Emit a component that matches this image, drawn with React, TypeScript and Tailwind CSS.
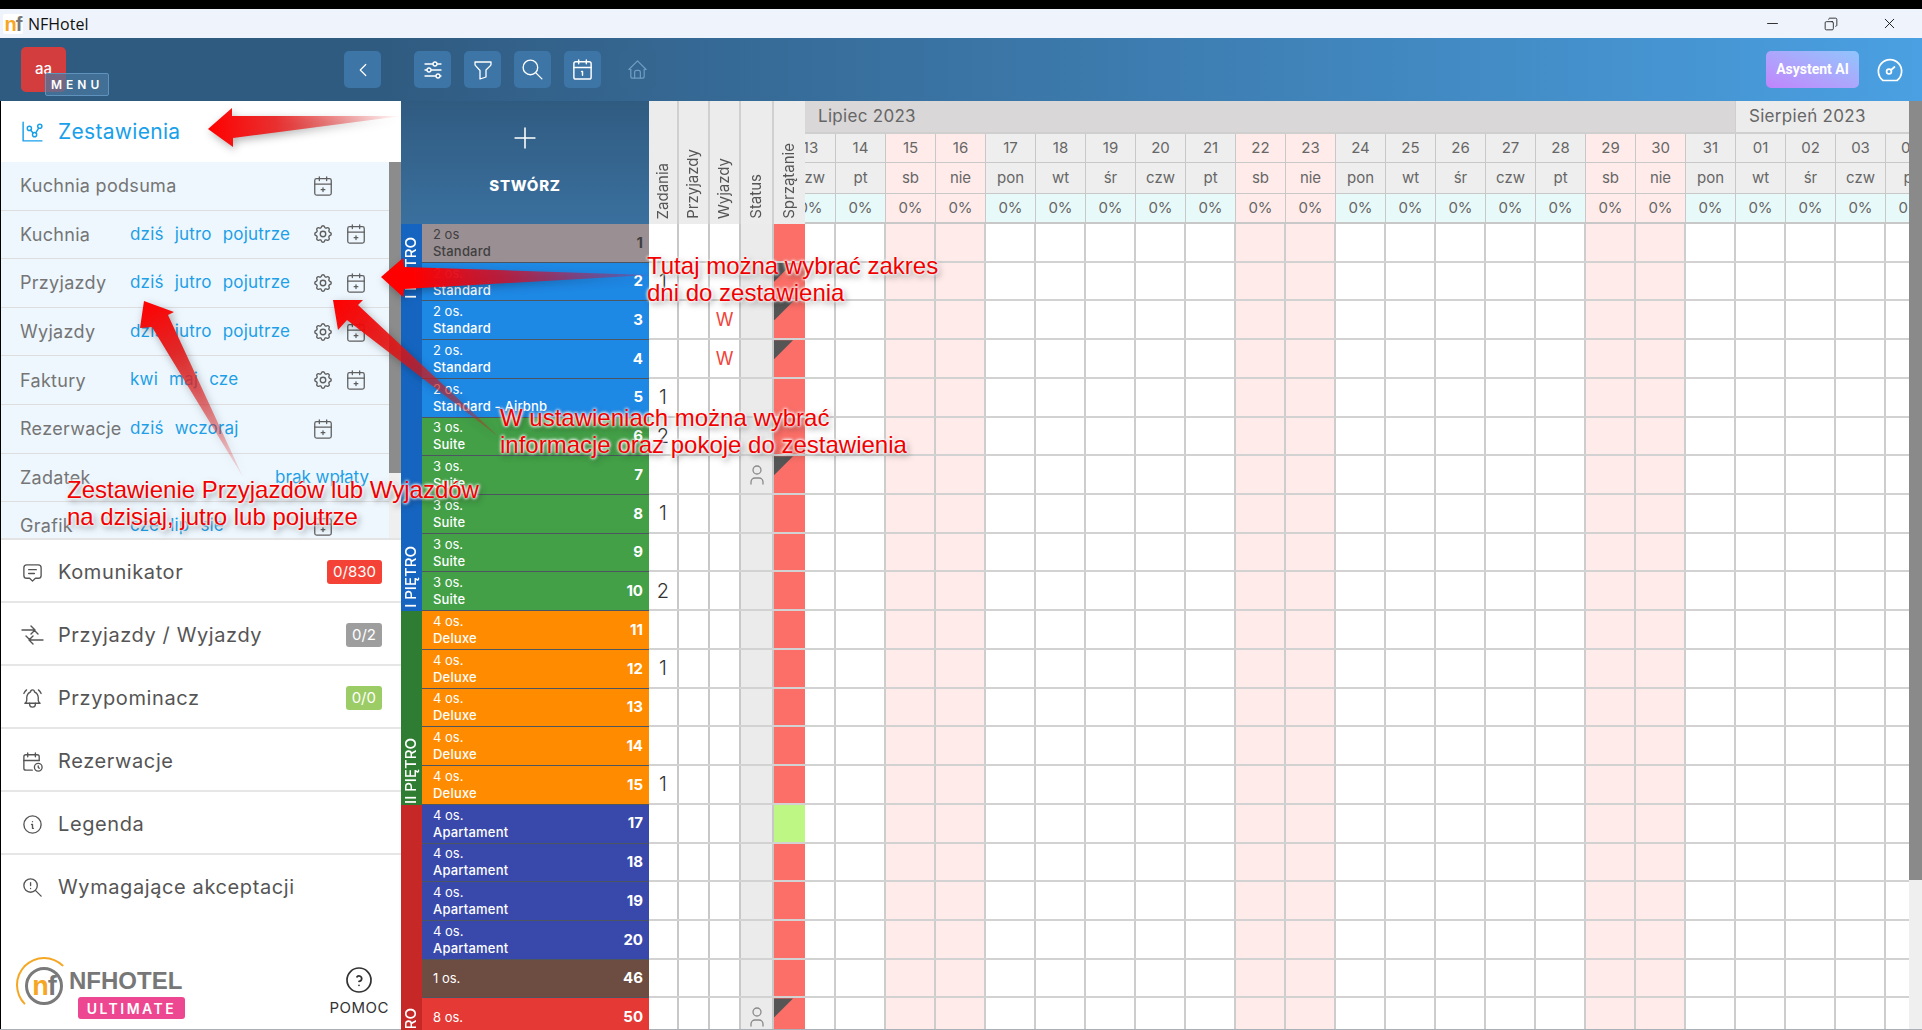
import type { ReactNode } from "react";
import { Calendar1, CalendarPlus2, Copy, Minus, X } from "lucide-react";
import {
  TbAdjustmentsHorizontal,
  TbBellRinging,
  TbCalendarTime,
  TbChartDots,
  TbChevronLeft,
  TbFilter,
  TbHelpCircle,
  TbHome,
  TbInfoCircle,
  TbMessage2,
  TbPlus,
  TbSearch,
  TbSettings,
  TbUser,
  TbZoomExclamation,
} from "react-icons/tb";

type ReportRow = {
  name: string;
  links: string[];
  gear?: boolean;
  extra?: string;
  noCalendar?: boolean;
};

const reports: ReportRow[] = [
  { name: "Kuchnia podsuma", links: [] },
  { name: "Kuchnia", links: ["dziś", "jutro", "pojutrze"], gear: true },
  { name: "Przyjazdy", links: ["dziś", "jutro", "pojutrze"], gear: true },
  { name: "Wyjazdy", links: ["dziś", "jutro", "pojutrze"], gear: true },
  { name: "Faktury", links: ["kwi", "maj", "cze"], gear: true },
  { name: "Rezerwacje", links: ["dziś", "wczoraj"] },
  { name: "Zadatek", links: [], extra: "brak wpłaty", noCalendar: true },
  { name: "Grafik", links: ["cze", "lip", "sie"] },
];

type Room = {
  people: string;
  type?: string;
  no: number;
  bg: string;
  tasks?: number;
  out?: boolean;
  guest?: boolean;
  corner?: boolean;
  clean?: boolean;
  dark?: boolean;
};

const BLUE = "bg-[#1e88e5]";
const GREEN = "bg-[#43a047]";
const ORANGE = "bg-[#ff8c00]";
const INDIGO = "bg-[#3949ab]";

const rooms: Room[] = [
  { people: "2 os", type: "Standard", no: 1, bg: "bg-[#9a8f93]", dark: true },
  { people: "2 os.", type: "Standard", no: 2, bg: BLUE, tasks: 1, corner: true },
  { people: "2 os.", type: "Standard", no: 3, bg: BLUE, out: true, corner: true },
  { people: "2 os.", type: "Standard", no: 4, bg: BLUE, out: true, corner: true },
  { people: "2 os.", type: "Standard - Airbnb", no: 5, bg: BLUE, tasks: 1 },
  { people: "3 os.", type: "Suite", no: 6, bg: GREEN, tasks: 2 },
  { people: "3 os.", type: "Suite", no: 7, bg: GREEN, guest: true, corner: true },
  { people: "3 os.", type: "Suite", no: 8, bg: GREEN, tasks: 1 },
  { people: "3 os.", type: "Suite", no: 9, bg: GREEN },
  { people: "3 os.", type: "Suite", no: 10, bg: GREEN, tasks: 2 },
  { people: "4 os.", type: "Deluxe", no: 11, bg: ORANGE },
  { people: "4 os.", type: "Deluxe", no: 12, bg: ORANGE, tasks: 1 },
  { people: "4 os.", type: "Deluxe", no: 13, bg: ORANGE },
  { people: "4 os.", type: "Deluxe", no: 14, bg: ORANGE },
  { people: "4 os.", type: "Deluxe", no: 15, bg: ORANGE, tasks: 1 },
  { people: "4 os.", type: "Apartament", no: 17, bg: INDIGO, clean: true },
  { people: "4 os.", type: "Apartament", no: 18, bg: INDIGO },
  { people: "4 os.", type: "Apartament", no: 19, bg: INDIGO },
  { people: "4 os.", type: "Apartament", no: 20, bg: INDIGO },
  { people: "1 os.", no: 46, bg: "bg-[#6d4c41]" },
  { people: "8 os.", no: 50, bg: "bg-[#e53935]", guest: true, corner: true },
];

const days = [
  ["13", "czw"], ["14", "pt"], ["15", "sb"], ["16", "nie"], ["17", "pon"], ["18", "wt"],
  ["19", "śr"], ["20", "czw"], ["21", "pt"], ["22", "sb"], ["23", "nie"], ["24", "pon"],
  ["25", "wt"], ["26", "śr"], ["27", "czw"], ["28", "pt"], ["29", "sb"], ["30", "nie"],
  ["31", "pon"], ["01", "wt"], ["02", "śr"], ["03", "czw"], ["04", "pt"],
];

const isWeekend = (name: string) => name === "sb" || name === "nie";

const ToolButton = ({ children, dim }: { children: ReactNode; dim?: boolean }) => (
  <div
    className={`flex h-[37px] w-[37px] items-center justify-center rounded-[5px] ${
      dim ? "bg-[#356690] text-[#6f9bc0]" : "bg-[#3c75a6] text-white"
    }`}
  >
    {children}
  </div>
);

const ExchangeIcon = () => (
  <svg width="23" height="23" viewBox="0 0 23 23" fill="none" stroke="#555" strokeWidth="1.4" strokeLinecap="round" strokeLinejoin="round">
    <path d="M1 6h12l4 4M10 2l4 4-4 4M22 16H9l-4-4M12 12l-4 4 4 4" />
  </svg>
);

const GaugeIcon = () => (
  <svg width="26" height="26" viewBox="0 0 26 26" fill="none" stroke="white" strokeWidth="1.7" strokeLinecap="round">
    <path d="M6 23.5A11.6 11.6 0 1 1 20 23.5H6Z" />
    <circle cx="12" cy="14.5" r="2.4" />
    <path d="M14 13l3.5-3" />
  </svg>
);

const VerticalHead = ({ label, width, noBorder }: { label: string; width: string; noBorder?: boolean }) => (
  <div className={`flex ${width} items-end justify-center border-[#d0d0d0] bg-[#ececec] pb-[5px] ${noBorder ? "" : "border-r-2"}`}>
    <span className="rotate-180 text-[15px] text-[#555] [writing-mode:vertical-rl]">{label}</span>
  </div>
);

const FloorLabel = ({ text, className = "" }: { text: string; className?: string }) => (
  <span className={`rotate-180 text-[15px] font-medium whitespace-nowrap text-white [writing-mode:vertical-rl] ${className}`}>
    {text}
  </span>
);

const ReportItem = ({ row }: { row: ReportRow }) => (
  <div className="flex h-[48.6px] shrink-0 items-center border-b border-[#dedede] pl-[19px]">
    <span className="w-[110px] shrink-0 text-[18px] tracking-[0.3px] whitespace-nowrap text-[#757575]">{row.name}</span>
    <div className="flex flex-1 gap-[11px] text-[17px] tracking-[0.2px] text-[#1e9fe6]">
      {row.links.map((link) => (
        <span key={link}>{link}</span>
      ))}
    </div>
    {row.extra ? (
      <span className="mr-[9px] text-[17px] whitespace-nowrap text-[#1e9fe6]">{row.extra}</span>
    ) : (
      <div className="flex w-[66px] shrink-0 gap-[11px] text-[#5f5f5f]">
        {row.gear && <TbSettings size={22} strokeWidth={1.5} />}
        {!row.noCalendar && <CalendarPlus2 size={22} strokeWidth={1.4} />}
      </div>
    )}
    <div className="w-[11px] shrink-0" />
  </div>
);

const MenuItem = ({ icon, label, badge, badgeBg }: { icon: ReactNode; label: string; badge?: string; badgeBg?: string }) => (
  <div className="flex h-[63px] shrink-0 items-center border-b-2 border-[#e6e6e6] pt-[3px] pr-[19px] pl-[20px]">
    <div className="flex w-[37px] shrink-0 text-[#555]">{icon}</div>
    <span className="flex-1 text-[20px] tracking-[0.6px] text-[#555]">{label}</span>
    {badge && (
      <span className={`rounded-[3px] px-[6px] py-[1px] text-[15px] text-white ${badgeBg}`}>{badge}</span>
    )}
  </div>
);

const Logo = () => (
  <div className="relative h-[62px] w-[175px]">
    <div className="absolute top-0 left-0 h-[56px] w-[56px] rounded-full border-2 border-transparent border-t-[#f5a623] border-l-[#f5a623]" />
    <div className="absolute top-[10px] left-[9px] flex h-[38px] w-[38px] items-center justify-center rounded-full border-[3px] border-[#7a7a7a] font-['Liberation_Sans',sans-serif] text-[27px] leading-none font-bold tracking-[-1px]">
      <span className="text-[#f5a623]">n</span>
      <span className="text-[#777]">f</span>
    </div>
    <span className="absolute top-[12px] left-[53px] font-['Liberation_Sans',sans-serif] text-[24px] leading-none font-bold text-[#777]">
      NFHOTEL
    </span>
    <span className="absolute top-[40px] left-[62px] flex h-[22px] w-[107px] items-center justify-center rounded-[3px] bg-[#ee4792] text-[14px] font-semibold tracking-[2.5px] text-white">
      ULTIMATE
    </span>
  </div>
);

// red call-out arrows painted over the screenshot
const Arrows = () => (
  <svg className="pointer-events-none absolute top-0 left-0 [filter:drop-shadow(2px_3px_4px_rgba(0,0,0,0.3))]" width="1922" height="1030">
    <defs>
      <linearGradient id="a1" gradientUnits="userSpaceOnUse" x1="208" y1="129" x2="402" y2="116">
        <stop offset="0" stopColor="#ff0000" />
        <stop offset="0.35" stopColor="#e83030" />
        <stop offset="1" stopColor="#e83030" stopOpacity="0" />
      </linearGradient>
      <linearGradient id="a2" gradientUnits="userSpaceOnUse" x1="381" y1="277" x2="650" y2="275">
        <stop offset="0" stopColor="#ff0000" />
        <stop offset="0.12" stopColor="#ff0000" />
        <stop offset="0.45" stopColor="#d01028" stopOpacity="0.85" />
        <stop offset="1" stopColor="#b02060" stopOpacity="0.3" />
      </linearGradient>
      <linearGradient id="a3" gradientUnits="userSpaceOnUse" x1="333" y1="300" x2="500" y2="440">
        <stop offset="0" stopColor="#ff0000" />
        <stop offset="0.3" stopColor="#e81010" stopOpacity="0.9" />
        <stop offset="1" stopColor="#c02020" stopOpacity="0.3" />
      </linearGradient>
      <linearGradient id="a4" gradientUnits="userSpaceOnUse" x1="144" y1="301" x2="243" y2="477">
        <stop offset="0" stopColor="#ff0000" />
        <stop offset="0.3" stopColor="#e02828" />
        <stop offset="1" stopColor="#e02828" stopOpacity="0.1" />
      </linearGradient>
    </defs>
    <polygon points="144,301 174,312 168,315 243,477 152,327 140,328" fill="url(#a4)" />
    <polygon points="333,300 363,300 358,305 500,438 347,320 338,330" fill="url(#a3)" />
    <polygon points="381,277 403,258 404,267 650,275 404,289 403,297" fill="url(#a2)" />
    <polygon points="208,129 232,108 232,116 402,116 233,138 233,147" fill="url(#a1)" />
  </svg>
);

const Note = ({ top, left, lines }: { top: string; left: string; lines: string[] }) => (
  <div
    className={`absolute ${top} ${left} font-['Liberation_Sans',sans-serif] text-[24px] leading-[27px] whitespace-nowrap text-[#f00000] [text-shadow:0_0_3px_#fff,0_0_3px_#fff,0_0_4px_#fff,2px_3px_6px_rgba(0,0,0,0.5)]`}
  >
    {lines.map((line) => (
      <div key={line}>{line}</div>
    ))}
  </div>
);

export default function App() {
  return (
    <div className="relative flex h-[1030px] w-[1922px] flex-col overflow-hidden bg-black pt-[9px] font-['Inter',sans-serif]">
      {/* window title bar */}
      <div className="flex h-[29px] shrink-0 items-center bg-[#eff3fb] pr-[24px] pl-[3px] text-[#111]">
        <div className="flex h-[20px] w-[20px] items-center justify-center rounded-[2px] bg-white font-['Liberation_Sans',sans-serif] text-[20px] leading-none font-bold tracking-[-1px]">
          <span className="text-[#f5a623]">n</span>
          <span className="text-[#777]">f</span>
        </div>
        <span className="ml-[5px] flex-1 font-['Open_Sans',sans-serif] text-[16px]">NFHotel</span>
        <Minus size={17} strokeWidth={1.2} />
        <Copy size={14} strokeWidth={1.4} className="mr-[43.5px] ml-[42.5px] -scale-x-100" />
        <X size={17} strokeWidth={1.3} />
      </div>

      {/* app header */}
      <div className="flex h-[63px] shrink-0 items-center bg-gradient-to-r from-[#305b81] from-20% to-[#4aa0e2]">
        <div className="relative flex w-[401px] shrink-0 items-center justify-between pr-[20px] pl-[21px]">
          <div className="flex h-[45px] w-[45px] items-center justify-center rounded-[5px] bg-[#d33d3d] text-[15px] font-medium text-white">
            aa
          </div>
          <span className="absolute top-[26px] left-[45px] rounded-[2px] border border-[#5f93bd] bg-[#4a78a0]/70 px-[5px] py-[1px] text-[12px] leading-[19px] font-semibold tracking-[4px] text-white">
            MENU
          </span>
          <ToolButton>
            <TbChevronLeft size={22} strokeWidth={1.3} />
          </ToolButton>
        </div>
        <div className="ml-[13px] flex gap-[13px]">
          <ToolButton>
            <TbAdjustmentsHorizontal size={24} strokeWidth={1.3} />
          </ToolButton>
          <ToolButton>
            <TbFilter size={24} strokeWidth={1.3} />
          </ToolButton>
          <ToolButton>
            <TbSearch size={25} strokeWidth={1.3} />
          </ToolButton>
          <ToolButton>
            <Calendar1 size={23} strokeWidth={1.5} />
          </ToolButton>
          <div className="ml-[5px]">
            <ToolButton dim>
              <TbHome size={23} strokeWidth={1.3} />
            </ToolButton>
          </div>
        </div>
        <div className="flex-1" />
        <div className="flex h-[37px] w-[93px] items-center justify-center rounded-[5px] bg-gradient-to-tr from-[#c084fc] to-[#8ec5fc] font-['Roboto',sans-serif] text-[14px] font-bold text-white">
          Asystent AI
        </div>
        <div className="mr-[19px] ml-[18px]">
          <GaugeIcon />
        </div>
      </div>

      <div className="flex min-h-0 flex-1 border-b border-[#a9b0b8] bg-white">
        {/* sidebar */}
        <div className="flex w-[401px] shrink-0 flex-col border-l border-black bg-white">
          <div className="flex h-[61px] shrink-0 items-center gap-[13px] pl-[19px] text-[#18a0ea]">
            <TbChartDots size={25} strokeWidth={1.4} />
            <span className="text-[21px] tracking-[0.3px]">Zestawienia</span>
          </div>
          <div className="flex h-[376px] shrink-0 overflow-hidden">
            <div className="flex flex-1 flex-col bg-[#eef7fe]">
              {reports.map((row) => (
                <ReportItem key={row.name} row={row} />
              ))}
            </div>
            <div className="w-[12px] shrink-0 bg-[#efefef]">
              <div className="h-[311px] bg-[#8c8c8c]" />
            </div>
          </div>
          <div className="flex min-h-0 flex-1 flex-col border-t-2 border-[#e4e4e4]">
            <MenuItem icon={<TbMessage2 size={23} strokeWidth={1.4} />} label="Komunikator" badge="0/830" badgeBg="bg-[#f44336]" />
            <MenuItem icon={<ExchangeIcon />} label="Przyjazdy / Wyjazdy" badge="0/2" badgeBg="bg-[#9e9e9e]" />
            <MenuItem icon={<TbBellRinging size={23} strokeWidth={1.4} />} label="Przypominacz" badge="0/0" badgeBg="bg-[#9ccc65]" />
            <MenuItem icon={<TbCalendarTime size={23} strokeWidth={1.4} />} label="Rezerwacje" />
            <MenuItem icon={<TbInfoCircle size={23} strokeWidth={1.4} />} label="Legenda" />
            <div className="flex h-[63px] shrink-0 items-center pt-[1px] pl-[20px]">
              <div className="flex w-[37px] shrink-0 text-[#555]">
                <TbZoomExclamation size={23} strokeWidth={1.4} />
              </div>
              <span className="text-[20px] tracking-[0.6px] text-[#555]">Wymagające akceptacji</span>
            </div>
            <div className="mt-auto flex items-end justify-between pr-[12px] pb-[10px] pl-[15px]">
              <Logo />
              <div className="flex flex-col items-center text-[#333]">
                <TbHelpCircle size={32} strokeWidth={1.3} />
                <span className="mt-[1px] text-[15px] tracking-[0.5px]">POMOC</span>
              </div>
            </div>
          </div>
        </div>

        {/* calendar */}
        <div className="flex min-w-0 flex-1">
          <div className="flex w-[248px] shrink-0 flex-col">
            <div className="flex h-[123px] shrink-0 flex-col items-center bg-gradient-to-b from-[#305b81] to-[#3a709e] pt-[20px] text-white">
              <TbPlus size={34} strokeWidth={1.1} />
              <span className="mt-[20px] text-[15px] font-extrabold tracking-[0.7px]">STWÓRZ</span>
            </div>
            <div className="flex">
              <div className="flex w-[21px] shrink-0 flex-col">
                <div className="flex h-[387px] flex-col items-center justify-between bg-[#1565c0] pt-[13px] pb-[3px]">
                  <FloorLabel text="I PIĘTRO" />
                  <FloorLabel text="I PIĘTRO" />
                </div>
                <div className="flex h-[193.6px] flex-col items-center justify-end bg-[#2e7d32] pb-[1px]">
                  <FloorLabel text="II PIĘTRO" />
                </div>
                <div className="flex h-[273px] flex-col items-center justify-end bg-[#c62828]">
                  <FloorLabel text="III PIĘTRO" />
                </div>
              </div>
              <div className="flex flex-1 flex-col">
                {rooms.map((room) => (
                  <div
                    key={room.no}
                    className={`flex h-[38.73px] shrink-0 items-center justify-between border-b border-[#4d5560] pr-[6px] pl-[11px] ${room.bg} ${
                      room.dark ? "text-[#3f3f3f]" : "text-white"
                    }`}
                  >
                    <div className="flex flex-col justify-center whitespace-nowrap">
                      <span className="text-[13px] leading-[17px]">{room.people}</span>
                      {room.type && <span className="text-[13px] leading-[17px] font-medium tracking-[0.2px]">{room.type}</span>}
                    </div>
                    <span className="text-[15px] font-bold">{room.no}</span>
                  </div>
                ))}
              </div>
            </div>
          </div>

          <div className="flex min-w-0 flex-1 flex-col overflow-hidden">
            <div className="flex h-[123px] shrink-0">
              <VerticalHead label="Zadania" width="w-[30px]" />
              <VerticalHead label="Przyjazdy" width="w-[31px]" />
              <VerticalHead label="Wyjazdy" width="w-[31px]" />
              <VerticalHead label="Status" width="w-[33px]" />
              <VerticalHead label="Sprzątanie" width="w-[31px]" noBorder />
              <div className="flex min-w-0 flex-1 flex-col overflow-hidden border-b-2 border-[#c8c8c8]">
                <div className="flex h-[33px] shrink-0 border-b-2 border-[#cfcfcf] text-[17px] tracking-[0.3px] text-[#666]">
                  <div className="flex w-[930px] shrink-0 items-center bg-[#d9d7d7] pl-[13px]">Lipiec 2023</div>
                  <div className="flex flex-1 items-center border-l border-[#cfcfcf] bg-[#ececec] pl-[13px]">Sierpień 2023</div>
                </div>
                <div className="-ml-[19px] flex flex-1 text-[15px] text-[#666]">
                  {days.map(([date, name]) => (
                    <div key={date} className="flex w-[50px] shrink-0 flex-col border-r border-[#c8c8c8] text-center">
                      <div className={`flex h-[29px] items-center justify-center border-b border-[#c8c8c8] ${isWeekend(name) ? "bg-[#ffecea]" : "bg-[#eeeeee]"}`}>
                        {date}
                      </div>
                      <div className={`flex h-[31px] items-center justify-center border-b border-[#c8c8c8] ${isWeekend(name) ? "bg-[#ffecea]" : "bg-[#eeeeee]"}`}>
                        {name}
                      </div>
                      <div className={`flex flex-1 items-center justify-center ${isWeekend(name) ? "bg-[#ffecea]" : "bg-[#e8f9f9]"}`}>
                        0%
                      </div>
                    </div>
                  ))}
                </div>
              </div>
            </div>
            {rooms.map((room) => (
              <div key={room.no} className="flex h-[38.73px] shrink-0 border-b-2 border-[#d2d2d2]">
                <div className="flex w-[30px] items-center justify-center border-r-2 border-[#c8c8c8] text-[20px] font-light text-[#333]">
                  {room.tasks}
                </div>
                <div className="w-[31px] border-r-2 border-[#c8c8c8]" />
                <div className="flex w-[31px] items-center justify-center border-r-2 border-[#c8c8c8] text-[18px] text-[#f0443a]">
                  {room.out && "W"}
                </div>
                <div className="flex w-[33px] items-center justify-center border-r-2 border-[#c8c8c8] bg-[#ebebeb] text-[#8a8a8a]">
                  {room.guest && <TbUser size={24} strokeWidth={1.3} />}
                </div>
                <div className={`relative w-[31px] ${room.clean ? "bg-[#bff784]" : "bg-[#fb6f68]"}`}>
                  {room.corner && (
                    <div className="absolute top-0 left-0 h-[19px] w-[19px] bg-[#555] [clip-path:polygon(0_0,100%_0,0_100%)]" />
                  )}
                </div>
                <div className="min-w-0 flex-1 overflow-hidden">
                  <div className="-ml-[19px] flex h-full">
                    {days.map(([date, name]) => (
                      <div
                        key={date}
                        className={`w-[50px] shrink-0 border-r-2 border-[#cdcdcd] ${isWeekend(name) ? "bg-[#ffecea]" : "bg-white"}`}
                      />
                    ))}
                  </div>
                </div>
              </div>
            ))}
          </div>

          <div className="w-[13px] shrink-0 bg-[#efefef]">
            <div className="h-[779px] bg-[#8a8a8a]" />
          </div>
        </div>
      </div>

      <Arrows />
      <Note top="top-[252px]" left="left-[647px]" lines={["Tutaj można wybrać zakres", "dni do zestawienia"]} />
      <Note top="top-[404px]" left="left-[500px]" lines={["W ustawieniach można wybrać", "informacje oraz pokoje do zestawienia"]} />
      <Note top="top-[476px]" left="left-[67px]" lines={["Zestawienie Przyjazdów lub Wyjazdów", "na dzisiaj, jutro lub pojutrze"]} />
    </div>
  );
}
